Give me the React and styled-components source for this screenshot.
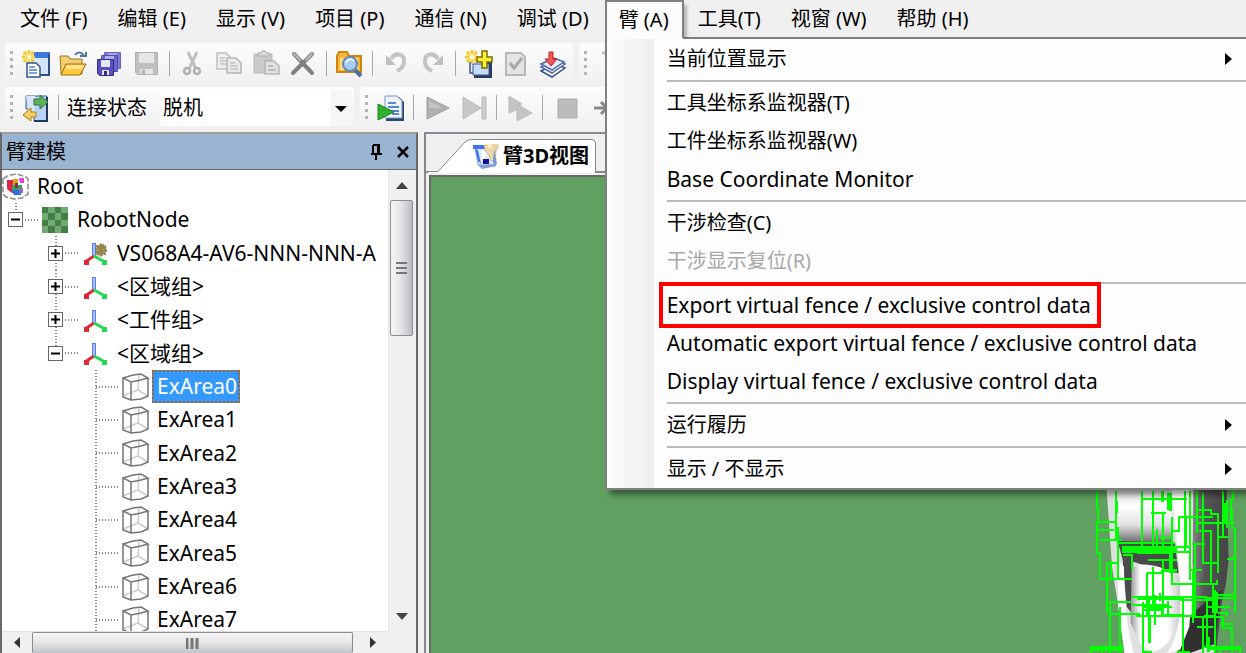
import React from "react";
import styled, { createGlobalStyle, css } from "styled-components";

const GlobalStyle = createGlobalStyle`
  * { box-sizing: border-box; }
  html, body, #root { height: 100%; }
  body {
    margin: 0;
    overflow: hidden;
    background: #f0f0f0;
    color: #000;
    font: 20px/24px "Noto Sans", "Noto Sans CJK SC", sans-serif;
  }
  button, select {
    margin: 0;
    padding: 0;
    border: 0;
    background: none;
    color: inherit;
    font: inherit;
  }
  svg { display: block; flex: none; }
`;

const Shell = styled.div`
  display: flex;
  flex-direction: column;
  height: 100%;
  overflow: hidden;
`;

/* ---------- menu bar ---------- */

const MenuBar = styled.nav`
  display: flex;
  height: 38px;
  flex: none;
  padding-left: 6px;
`;

const MenuSlot = styled.div`
  position: relative;
  z-index: ${(p) => (p.$open ? 5 : "auto")};
  display: flex;
  flex: none;
`;

const MenuTitle = styled.button`
  padding: 0 16px 0 14px;
  white-space: nowrap;
  ${(p) =>
    p.$open &&
    css`
      position: relative;
      z-index: 2;
      padding: 0 13px 0 12px;
      border: 2px solid #808080;
      border-bottom: 0;
      background: #fcfcfc;
      box-shadow: 4px 4px 3px -1px rgba(0, 0, 0, 0.25);
      clip-path: inset(0 -6px 0 0);
    `}
`;

const Dropdown = styled.div`
  position: absolute;
  top: 37px;
  left: 0;
  width: 644px;
  padding: 1px 0 0 60px;
  border: 2px solid #808080;
  background: linear-gradient(90deg, #fcfcfc 0, #eee 47px, #fdfdfd 47px);
  box-shadow: 5px 5px 5px rgba(0, 0, 0, 0.4);

  &::before {
    content: "";
    position: absolute;
    top: -2px;
    left: 0;
    width: 76px;
    height: 2px;
    background: #fcfcfc;
  }
`;

const MenuItem = styled.button`
  display: flex;
  align-items: center;
  justify-content: space-between;
  width: 100%;
  height: 38px;
  padding-right: 15px;
  text-align: left;
  white-space: nowrap;

  &:disabled { color: #a8a8a8; }
`;

const MenuLabel = styled.span`
  line-height: 38px;
  ${(p) => p.$latin && "font-size: 21px;"}
  ${(p) =>
    p.$marked &&
    css`
      margin-left: -4px;
      padding: 0 6px 0 4px;
      outline: 4px solid #f00;
    `}
`;

const MenuRule = styled.hr`
  height: 2px;
  margin: 2px 0;
  border: 0;
  background: #bbb;
`;

/* ---------- toolbars ---------- */

const ToolbarRow = styled.div`
  display: flex;
  gap: 6px;
  flex: none;
  height: 44px;
  padding: 5px 0 0 5px;
`;

const Strip = styled.div`
  display: flex;
  align-items: center;
  height: 41px;
  padding-right: 2px;
  border-radius: 3px;
  background: linear-gradient(#fdfdfd, #f0f0f0);
  ${(p) => p.$grow && "flex: 1; overflow: hidden;"}
`;

const Grip = styled.span`
  flex: none;
  width: 3px;
  height: 26px;
  margin: 0 4px 0 5px;
  background: repeating-linear-gradient(#b4b4b4 0 3px, transparent 3px 7px);
`;

const ToolButton = styled.button`
  display: flex;
  align-items: center;
  justify-content: center;
  flex: none;
  width: 37px;
  height: 36px;
`;

const ToolRule = styled.span`
  flex: none;
  width: 1px;
  height: 25px;
  margin: 0 4px;
  background: #a8a8a8;
`;

const StatusLabel = styled.label`
  margin: 0 13px 0 4px;
  white-space: nowrap;
`;

const SelectBox = styled.span`
  position: relative;
  display: flex;
  width: 192px;
  height: 36px;
  background: linear-gradient(90deg, #fff 171px, #f6f6f6 171px);

  svg {
    position: absolute;
    top: 16px;
    right: 5px;
    pointer-events: none;
  }
`;

const Select = styled.select`
  appearance: none;
  width: 100%;
  padding-left: 3px;
`;

/* ---------- work area ---------- */

const Work = styled.main`
  display: flex;
  gap: 6px;
  flex: 1;
  min-height: 0;
  padding-top: 6px;
`;

const Panel = styled.section`
  display: flex;
  flex-direction: column;
  flex: none;
  width: 418px;
  border: 2px solid #696969;
  border-top-color: #a0a0a0;
  border-bottom: 0;
  background: #fff;
`;

const PanelHead = styled.header`
  display: flex;
  align-items: center;
  gap: 13px;
  flex: none;
  height: 36px;
  padding: 0 6px 0 4px;
  border-bottom: 1px solid #696969;
  background: #99b4d1;
`;

const PanelTitle = styled.h2`
  flex: 1;
  margin: 0;
  font: inherit;
`;

const PanelBody = styled.div`
  display: grid;
  grid-template: minmax(0, 1fr) 22px / minmax(0, 1fr) 28px;
  flex: 1;
  min-height: 0;
  background: #f0f0f0;
`;

const Tree = styled.ul`
  overflow: hidden;
  margin: 0;
  padding: 0;
  background: #fff;
  font-size: 21px;
  list-style: none;
`;

const TreeRow = styled.li`
  display: flex;
  align-items: center;
  height: 33px;
  padding-left: ${(p) => Math.max(0, p.$level - 1) * 40}px;
  white-space: nowrap;
  &:nth-child(3n) { height: 34px; }
`;

const Branch = styled.span`
  display: flex;
  align-items: center;
  flex: none;
  width: 40px;
  height: 100%;
  padding-left: 6px;
  background:
    repeating-linear-gradient(#888 0 1px, transparent 1px 3px) 13px 0 / 2px ${(p) => (p.$last ? "50%" : "100%")} no-repeat,
    repeating-linear-gradient(90deg, #888 0 1px, transparent 1px 3px) 14px 50% / 24px 2px no-repeat;
`;

const Expander = styled.button`
  display: flex;
  align-items: center;
  justify-content: center;
  width: 15px;
  height: 15px;
  border: 1px solid #666;
  background: #fff;
`;

const NodeIcon = styled.span`
  flex: none;
  width: ${(p) => (p.$small ? 24 : 28)}px;
  margin-right: ${(p) => (p.$small ? 4 : 2)}px;
  margin-left: ${(p) => (p.$small ? 2 : 0)}px;
`;

const NodeLabel = styled.span`
  height: 33px;
  padding: 0 3px 0 4px;
  border: 1px solid transparent;
  line-height: 31px;
  ${(p) =>
    p.$selected &&
    css`
      padding: 0 1px 0 3px;
      border: 2px dotted #b06010;
      line-height: 29px;
      background: #39f;
      color: #fff;
    `}
`;

const VScroll = styled.div`
  display: flex;
  flex-direction: column;
  padding: 0 3px 0 1px;
  border-left: 1px solid #e4e4e4;
`;

const HScroll = styled.div`
  display: flex;
  border-top: 1px solid #e0e0e0;
`;

const ScrollButton = styled.button`
  display: flex;
  align-items: center;
  justify-content: center;
  flex: none;
  ${(p) => (p.$wide ? "width: 30px; height: 21px;" : "width: 23px; height: 30px;")}
`;

const Thumb = styled.div`
  display: flex;
  align-items: center;
  justify-content: center;
  border: 1px solid #8c8c8c;
  border-radius: 2px;
  ${(p) =>
    p.$wide
      ? "flex: 1; margin-right: 5px; border-bottom: 0; background: linear-gradient(#f6f6f6, #e4e4e6 50%, #c4c5c9);"
      : "height: 136px; margin-bottom: auto; background: linear-gradient(90deg, #f6f6f6, #e2e2e4 50%, #bcbdc2);"}
`;

const View = styled.section`
  display: flex;
  flex-direction: column;
  flex: 1;
  min-width: 0;
  border-top: 2px solid #858891;
  border-left: 2px solid #858891;
`;

const TabStrip = styled.div`
  display: flex;
  align-items: flex-end;
  flex: none;
  height: 39px;
  padding: 5px 0 0 2px;
  background: linear-gradient(#f0f0f0 37px, #858891 37px);
`;

const TabSlope = styled.svg`
  width: 44px;
  height: 34px;
`;

const Tab = styled.button`
  display: flex;
  align-items: center;
  gap: 3px;
  height: 34px;
  padding: 0 6px 2px 0;
  border-top: 1px solid #858891;
  border-right: 1px solid #858891;
  border-radius: 0 5px 0 0;
  background: #fff;
  font-weight: 700;
`;

const Canvas = styled.div`
  position: relative;
  flex: 1;
  margin: 2px 0 0 3px;
  border-top: 2px solid #696969;
  border-left: 2px solid #696969;
  background: #60a060;
`;

const Robot = styled.svg`
  position: absolute;
  right: 0;
  bottom: 0;
  width: 166px;
  height: 163px;
`;

/* ---------- icons ---------- */

const Icon = ({ children, size = 28 }) => (
  <svg width={size} height={size} viewBox={`0 0 ${size} ${size}`} aria-hidden="true">
    {children}
  </svg>
);

const Spark = () => (
  <g stroke="#f0c838" strokeWidth="2">
    <path d="M1 1h11v11H1z" fill="#f8e080" stroke="none" />
    <path d="M7 0v14M0 7h13M2 2l10 10M12 2L2 12" />
    <circle cx="7" cy="7" r="3" fill="#fffce0" stroke="#f5e070" />
  </g>
);

const NewIcon = () => (
  <Icon>
    <path d="M10 3h17v22H10z" fill="#dce9fb" stroke="#456ea8" />
    <path d="M10 2h18v6H10z" fill="#3c7ae0" />
    <path d="M15 9h11v15H15z" fill="#d4e4fb" />
    <path d="M27 4v21H17" fill="none" stroke="#2f4f84" strokeWidth="2" />
    <Spark />
    <path d="M5 13h9l4 4v10H5z" fill="#fff" stroke="#35568f" strokeWidth="1.5" />
    <path d="M7 17h6M7 20h8M7 23h8" stroke="#4a83dc" strokeWidth="1.5" />
  </Icon>
);

const OpenIcon = () => (
  <Icon>
    <path d="M1 6h8l2 3h12v15H2z" fill="#f2ce70" stroke="#a27520" />
    <path d="M7 14h20l-6 11H2z" fill="#ffc93c" stroke="#a06a10" />
    <path d="M8 15h17l-2 4H6z" fill="#ffe48a" />
    <path d="M16 5c3-4 8-3 9 2M21 6h6V2" fill="none" stroke="#54779a" strokeWidth="2" />
  </Icon>
);

const Floppy = ({ x, y, s = 17, fill = "#5550bd", line = "#312e85", shade = "#e4e4fa" }) => (
  <g transform={`translate(${x} ${y})`}>
    <path d={`M.5.5h${s}v${s}h-${s - 2}l-2-2z`} fill={fill} stroke={line} />
    <path d={`M4 1h${s - 7}v${s / 2 - 1}H4z`} fill={shade} />
    <path d={`M5 ${s - 5}h${s - 9}v5H5z`} fill={shade} />
    <path d={`M7 ${s - 4}h3v4H7z`} fill={line} />
  </g>
);

const SaveAllIcon = () => (
  <Icon>
    <Floppy x="8" y="2" s={16} fill="#7e7ad8" line="#6864c4" shade="#a8a5ec" />
    <Floppy x="5" y="5" s={16} fill="#6b66cc" line="#524eb0" shade="#b4b1f0" />
    <Floppy x="1" y="9" s={16} />
  </Icon>
);

const SaveIcon = () => (
  <Icon>
    <Floppy x="2" y="2" s={22} fill="#c0c0c0" line="#b0b0b0" shade="#e6e6e6" />
  </Icon>
);

const CutIcon = () => (
  <Icon>
    <path d="M9 2l8 17M18 2L10 19" stroke="#c0c0c0" strokeWidth="3" />
    <circle cx="8" cy="21" r="3" fill="none" stroke="#b0b0b0" strokeWidth="2.5" />
    <circle cx="18" cy="21" r="3" fill="none" stroke="#b0b0b0" strokeWidth="2.5" />
  </Icon>
);

const CopyIcon = () => (
  <Icon>
    <path d="M1 3h9l4 4v12H1z" fill="#eee" stroke="#bebebe" strokeWidth="1.5" />
    <path d="M4 8h5M4 11h6M4 14h6" stroke="#c4c4c4" strokeWidth="1.5" />
    <path d="M11 8h9l5 5v10H11z" fill="#eaeaea" stroke="#b4b4b4" strokeWidth="1.5" />
    <path d="M14 13h5M14 16h8M14 19h8" stroke="#c0c0c0" strokeWidth="1.5" />
  </Icon>
);

const PasteIcon = () => (
  <Icon>
    <path d="M1 4h18v19H1z" fill="#cacaca" stroke="#b8b8b8" />
    <path d="M5 6V3h3l1-2h3l1 2h3v3z" fill="#ddd" stroke="#aaa" />
    <path d="M12 11h9l5 5v8H12z" fill="#e2e2e2" stroke="#b4b4b4" strokeWidth="1.5" />
    <path d="M15 16h5M15 20h8" stroke="#bcbcbc" strokeWidth="2" />
  </Icon>
);

const DeleteIcon = () => (
  <Icon>
    <path d="M4 4l18 19M22 4L3 23" stroke="#808080" strokeWidth="4" strokeLinecap="round" />
    <path d="M4 4l6 6M22 4l-6 6" stroke="#b8b8b8" strokeWidth="2" strokeLinecap="round" />
  </Icon>
);

const FindIcon = () => (
  <Icon>
    <path d="M1 6l2-4h8l2 4h12v16H1z" fill="#f7b93c" stroke="#d18312" strokeWidth="2" />
    <path d="M4 8h18v12H4z" fill="#ffda80" />
    <path d="M19 20l6 6" stroke="#4d6f9b" strokeWidth="4" />
    <circle cx="14" cy="14" r="7" fill="#a9cdf1" stroke="#6287b8" strokeWidth="2" />
    <path d="M10 13c1-4 5-5 8-2" stroke="#e9f5ff" strokeWidth="2" fill="none" />
  </Icon>
);

const UndoIcon = ({ flip }) => (
  <Icon>
    <g transform={flip ? "translate(28 0) scale(-1 1)" : undefined} stroke="#c4c4c4" fill="none">
      <path d="M9 9c4-7 14-6 13 3 0 5-3 7-7 9" strokeWidth="4" />
      <path d="M4 5v10h10z" fill="#c0c0c0" stroke="none" />
    </g>
  </Icon>
);

const AddIcon = () => (
  <Icon>
    <path d="M9 12h18v16H9z" fill="#263c63" />
    <path d="M5 9h16v14H5z" fill="#e3eefc" stroke="#3c5687" strokeWidth="1.5" />
    <path d="M8 14h16v11H8z" fill="#c5dbf8" stroke="#3c5687" />
    <Spark />
    <path d="M17 1h5v6h5v5h-5v6h-5v-6h-5V7h5z" fill="#ffee38" stroke="#777000" strokeWidth="1.5" />
  </Icon>
);

const CheckIcon = () => (
  <Icon>
    <path d="M4 3h15l4 4v18H4z" fill="#e4e4e4" stroke="#b8b8b8" strokeWidth="2" />
    <path d="M8 13l4 5 8-10" fill="none" stroke="#a6a6a6" strokeWidth="3" />
  </Icon>
);

const ImportIcon = () => (
  <Icon>
    <path d="M2 21l14-7 10 4-13 9z" fill="#fff" stroke="#35508a" strokeWidth="1.5" />
    <path d="M2 17l14-7 10 4-13 9z" fill="#fff" stroke="#506aa5" strokeWidth="1.5" />
    <path d="M2 14l13-6 10 4-12 8z" fill="#e5edff" stroke="#506aa5" strokeWidth="1.5" />
    <path d="M10 2h4v7h4l-6 7-6-7h4z" fill="#f25a5a" stroke="#c01e1e" />
  </Icon>
);

const FilterIcon = () => (
  <Icon>
    <path d="M6 3h20M9 8h17M13 13h13M18 17v8" stroke="#c4c4c4" strokeWidth="3" />
  </Icon>
);

const ConnectIcon = () => (
  <Icon>
    <path d="M4 2h21v25H12V15H4z" fill="#b9d2f7" stroke="#426599" />
    <path d="M4 2h9v21H8z" fill="#d8e6fc" />
    <path d="M25 3v24H12" fill="none" stroke="#22355c" strokeWidth="2" />
    <path d="M12 5h6V1l8 7-8 7v-4h-6z" fill="#5cb05a" stroke="#34793a" />
    <path d="M14 18H9v-4l-8 7 8 6v-4h5z" fill="#f5d060" stroke="#a87e18" />
  </Icon>
);

const RunDocIcon = () => (
  <Icon>
    <path d="M9 3h13l5 5v19H9z" fill="#2a4371" />
    <path d="M8 2h12l5 5v17H8z" fill="#eef5ff" stroke="#7894c8" />
    <path d="M11 9h8M11 13h11M11 17h11M15 20h7" stroke="#2b5fc5" strokeWidth="1.5" />
    <path d="M1 10l16 8-16 8z" fill="#2fb12f" stroke="#168016" />
  </Icon>
);

const PlayIcon = () => (
  <Icon>
    <path d="M4 3l22 11L4 25z" fill="#b0b0b0" stroke="#9c9c9c" />
    <path d="M6 7l14 7H6z" fill="#c4c4c4" />
  </Icon>
);

const StepIcon = () => (
  <Icon>
    <path d="M3 3l18 11L3 25z" fill="#c8c8c8" stroke="#b8b8b8" />
    <path d="M22 3h4v22h-4z" fill="#ccc" stroke="#b8b8b8" />
  </Icon>
);

const SkipIcon = () => (
  <Icon>
    <path d="M3 2l13 8-4 2v3l-9 4z" fill="#c4c4c4" stroke="#b8b8b8" />
    <path d="M11 10l15 9-15 8z" fill="#c4c4c4" stroke="#b8b8b8" />
  </Icon>
);

const StopIcon = () => (
  <Icon>
    <path d="M6 5h19v19H6z" fill="#bcbcbc" stroke="#acacac" />
  </Icon>
);

const ArrowIcon = () => (
  <Icon>
    <path d="M5 14h12M12 8l6 6-6 6" stroke="#888" strokeWidth="3" fill="none" />
  </Icon>
);

const Triangle = ({ d, w, h, fill = "#000" }) => (
  <svg width={w} height={h} viewBox={`0 0 ${w} ${h}`} aria-hidden="true">
    <path d={d} fill={fill} />
  </svg>
);

const RootIcon = () => (
  <Icon>
    <path
      d="M1 6l6-4 8-1 9 3 2 2v15l-6 4-8 1-8-2-3-3z"
      fill="#fff"
      stroke="#8a8a8a"
      strokeWidth="1.5"
      strokeDasharray="6 2"
    />
    <path d="M5 7h8v14l-3-1-5-4z" fill="#dd2448" />
    <path d="M11 6h5v6h-5z" fill="#e0a116" />
    <path d="M17 5h5v5h-4z" fill="#e93fe0" />
    <path d="M10 12h10v6H10z" fill="#37a14b" />
    <path d="M10 17h9v5h-7z" fill="#1b73df" />
    <path d="M17 15h4v5h-4z" fill="#9b63c4" />
    <path d="M13 10h3v5h-3z" fill="#735" />
  </Icon>
);

const BoardIcon = () => (
  <Icon>
    <path d="M0 1h26v26H0z" fill="#72a972" />
    <path
      d="M0 1h6v6H0zM13 1h6v6h-6zM6 7h7v7H6zM19 7h7v7h-7zM0 14h6v6H0zM13 14h6v6h-6zM6 20h7v7H6zM19 20h7v7h-7z"
      fill="#427f45"
    />
  </Icon>
);

const AxesIcon = ({ robot }) => (
  <Icon size={24}>
    <path d="M10 2v13" stroke="#5a7eec" strokeWidth="4" />
    <path d="M10 3v12" stroke="#a9c0ff" strokeWidth="2" />
    <path d="M10 15l-9 6" stroke="#e32636" strokeWidth="3" />
    <path d="M10 15l11 6" stroke="#22dc50" strokeWidth="3" />
    <path d="M0 19h5v5H0z" fill="#e32636" />
    <path d="M18 19h5v5h-5z" fill="#22dc50" />
    {robot && (
      <g>
        <circle cx="17" cy="9" r="5" fill="#a49058" stroke="#8a7a44" strokeWidth="2" strokeDasharray="2 1" />
        <path d="M12 4l10 10M22 4L12 14M17 2v14" stroke="#8a7a44" />
      </g>
    )}
  </Icon>
);

const CubeIcon = () => (
  <Icon>
    <path d="M17 2l-1 15L1 23M16 17l10 6" fill="none" stroke="#ccc" strokeWidth="1.5" />
    <path
      d="M1 5l10-3 8-1 7 4-7 2-10 2zM1 5v19l8 3 10-1 7-3V5M9 9v18"
      fill="none"
      stroke="#757575"
      strokeWidth="1.5"
    />
  </Icon>
);

const ViewIcon = () => (
  <Icon>
    <path d="M3 5l3 18 17 1 1-17z" fill="#dfe8fc" stroke="#8ba7df" />
    <path d="M1 3h12v4H1zM3 7l3 12 3 3-3-14z" fill="#3e75e8" />
    <path d="M12 3h14v3l-3 2 1 10-5 1-2-6-3-3z" fill="#ecd9ab" stroke="#d8bd84" />
    <path d="M10 8l5 3-2 7-4-2z" fill="#fff" />
    <path d="M15 2l3 5 2-4z" fill="#fff3c8" />
    <path d="M11 17h6v5h-6z" fill="#11119b" />
    <path d="M22 8l3 14-2 2-2-4z" fill="#6f93dc" />
    <path d="M6 23l18-1v2l-14 3z" fill="#7f9bd8" />
  </Icon>
);

/* ---------- robot model ---------- */

const RobotModel = () => (
  <Robot viewBox="0 30 498 489" preserveAspectRatio="none" role="img" aria-label="Robot">
    <defs>
      <linearGradient id="drum" x1="0" y1="0" x2="0" y2="1">
        <stop offset="0" stopColor="#d8d8d8" />
        <stop offset=".3" stopColor="#fff" />
        <stop offset=".65" stopColor="#e2e2e2" />
        <stop offset="1" stopColor="#666" />
      </linearGradient>
      <linearGradient id="side" x1="0" y1="0" x2="1" y2="0">
        <stop offset="0" stopColor="#e0e0e0" />
        <stop offset=".3" stopColor="#888" />
        <stop offset=".55" stopColor="#555" />
        <stop offset="1" stopColor="#444" />
      </linearGradient>
      <linearGradient id="core" x1="0" y1="0" x2="1" y2="0">
        <stop offset="0" stopColor="#999" />
        <stop offset=".2" stopColor="#fff" />
        <stop offset=".75" stopColor="#fff" />
        <stop offset="1" stopColor="#c8c8c8" />
      </linearGradient>
    </defs>
    <path d="M320 30H440L446 240L438 310L424 375L408 519H288L330 420z" fill="url(#side)" />
    <path d="M336 400L424 330L400 519H290z" fill="#303030" />
    <path d="M330 519L405 492V519z" fill="#ddd" />
    <path d="M80 30H340L336 400L288 519H133L118 400L96 260z" fill="#e0e0e0" />
    <path d="M105 30H275L280 190H115z" fill="url(#drum)" />
    <path d="M113 183L285 188L296 280L240 272L160 245L155 400L140 380L128 240z" fill="#4b4b4b" />
    <path d="M155 270Q170 242 240 262L300 290V400Q290 475 240 508Q205 525 180 490L152 430z" fill="url(#core)" />
    <path d="M276 30H325L338 280L328 440L300 510L262 519Q300 460 302 370L298 270z" fill="#fff" />
    <path d="M132 260Q132 420 162 519H134L115 380L112 240z" fill="#fff" />
    <g fill="none" stroke="#0f0" strokeWidth="6" shapeRendering="crispEdges">
      <path d="M51 33V84H55V127M51 127V218H60V298M51 126H108M51 151H103M60 180H126M60 298H156M81 250V397M93 243V300M81 250H110M90 363V519M90 366H152M84 402H180M33 519V500H130M45 508H130M66 519V495M120 380V519" />
      <path d="M108 33V184M113 140V300M187 33V120M184 57H320M218 33V213M246 33V66M264 40V90M213 100H258M250 95V213M187 120V213M230 147V215M275 110V300M240 174H280M280 152H296V112H350M315 33V215M330 33V300" />
      <path d="M350 33V160M350 90H392V103H415V280M368 40V250M350 110H400M350 128H462M356 152H394V310M430 33V170M440 60V145M460 33V60H453V120M466 145V400M445 90H456V145H466M415 170H445M367 250H412M442 236H466M335 192H375M345 192V410" />
      <path d="M126 201H330M126 216H330M116 190H285M130 225H155V270M205 240H290M243 272H290M200 278H250M250 240V400M220 260V380M200 278V405M275 300V312H335M310 350V400M330 270H365" />
      <path d="M156 350H320M170 358H310M155 374H260M185 382H275M190 390H246M168 408H335M207 350V489M190 365V519M225 345V435M240 340V362M246 385V405H310M263 363V402M275 350H380M300 361H415M338 312H412V300" />
      <path d="M340 275V430M368 410V519M380 355V500M398 310V400M405 330V519M385 380H450M335 410H430M310 400V519M290 515H330M350 440H400M375 355H466M408 345H466M415 400H440V410M430 409V445H455V519M420 432H460M370 500H480V519M385 508H486M420 497V519M186 516H215" />
    </g>
    <g fill="none" stroke="#0f0" strokeWidth="9" shapeRendering="crispEdges">
      <path d="M108 62V98M270 40V92M246 33V65M315 112V205M125 209H290M170 216H270M248 272H290M200 384H250M207 405V488M380 505H475M35 508H130M385 470V515M372 410H405M408 335V400M435 70V125M272 205V280" />
    </g>
  </Robot>
);

/* ---------- data ---------- */

const menusBefore = ["文件 (F)", "编辑 (E)", "显示 (V)", "项目 (P)", "通信 (N)", "调试 (D)"];
const menusAfter = ["工具(T)", "视窗 (W)", "帮助 (H)"];

const armMenu = [
  [{ label: "当前位置显示", sub: true }],
  [
    { label: "工具坐标系监视器(T)" },
    { label: "工件坐标系监视器(W)" },
    { label: "Base Coordinate Monitor", latin: true },
  ],
  [{ label: "干涉检查(C)" }, { label: "干涉显示复位(R)", disabled: true }],
  [
    { label: "Export virtual fence / exclusive control data", latin: true, marked: true },
    { label: "Automatic export virtual fence / exclusive control data", latin: true },
    { label: "Display virtual fence / exclusive control data", latin: true },
  ],
  [{ label: "运行履历", sub: true }],
  [{ label: "显示 / 不显示", sub: true }],
];

const fileTools = [
  [["New", NewIcon], ["Open", OpenIcon], ["Save all", SaveAllIcon], ["Save", SaveIcon]],
  [["Cut", CutIcon], ["Copy", CopyIcon], ["Paste", PasteIcon], ["Delete", DeleteIcon]],
  [["Find", FindIcon]],
  [["Undo", UndoIcon], ["Redo", () => <UndoIcon flip />]],
  [["Add", AddIcon], ["Check", CheckIcon], ["Import", ImportIcon]],
];

const runTools = [
  [["Run document", RunDocIcon]],
  [["Run", PlayIcon], ["Step", StepIcon]],
  [["Skip", SkipIcon]],
  [["Stop", StopIcon], ["Next", ArrowIcon]],
];

const nodes = [
  { level: 0, label: "Root", icon: RootIcon },
  { level: 1, label: "RobotNode", icon: BoardIcon, state: "-", last: true },
  { level: 2, label: "VS068A4-AV6-NNN-NNN-A", icon: () => <AxesIcon robot />, state: "+" },
  { level: 2, label: "<区域组>", icon: AxesIcon, state: "+" },
  { level: 2, label: "<工件组>", icon: AxesIcon, state: "+" },
  { level: 2, label: "<区域组>", icon: AxesIcon, state: "-", last: true },
  ...Array.from({ length: 8 }, (_, i) => ({
    level: 3,
    label: `ExArea${i}`,
    icon: CubeIcon,
    selected: i === 0,
  })),
];

const ToolGroups = ({ groups }) =>
  groups.map((group, i) => (
    <React.Fragment key={i}>
      {i > 0 && <ToolRule />}
      {group.map(([name, Glyph]) => (
        <ToolButton key={name} type="button" aria-label={name}>
          <Glyph />
        </ToolButton>
      ))}
    </React.Fragment>
  ));

const ArmDropdown = () => (
  <Dropdown role="menu">
    {armMenu.map((group, i) => (
      <React.Fragment key={i}>
        {i > 0 && <MenuRule />}
        {group.map((item) => (
          <MenuItem key={item.label} type="button" role="menuitem" disabled={item.disabled}>
            <MenuLabel $latin={item.latin} $marked={item.marked}>
              {item.label}
            </MenuLabel>
            {item.sub && <Triangle w={7} h={12} d="M0 0l7 6-7 6z" />}
          </MenuItem>
        ))}
      </React.Fragment>
    ))}
  </Dropdown>
);

const TreeNode = ({ level, label, icon: Glyph, state, last, selected }) => (
  <TreeRow $level={level}>
    {level > 0 && (
      <Branch $last={last}>
        {state && (
          <Expander type="button" aria-label={state === "+" ? "Expand" : "Collapse"}>
            <svg width="9" height="9" viewBox="0 0 9 9" aria-hidden="true">
              <path d={state === "+" ? "M0 4.5h9M4.5 0v9" : "M0 4.5h9"} stroke="#000" strokeWidth="2" />
            </svg>
          </Expander>
        )}
      </Branch>
    )}
    <NodeIcon $small={level === 2}>
      <Glyph />
    </NodeIcon>
    <NodeLabel $selected={selected}>{label}</NodeLabel>
  </TreeRow>
);

export default function App() {
  return (
    <Shell>
      <GlobalStyle />
      <MenuBar>
        {menusBefore.map((m) => (
          <MenuSlot key={m}>
            <MenuTitle type="button">{m}</MenuTitle>
          </MenuSlot>
        ))}
        <MenuSlot $open>
          <MenuTitle type="button" $open>
            臂 (A)
          </MenuTitle>
          <ArmDropdown />
        </MenuSlot>
        {menusAfter.map((m) => (
          <MenuSlot key={m}>
            <MenuTitle type="button">{m}</MenuTitle>
          </MenuSlot>
        ))}
      </MenuBar>

      <ToolbarRow>
        <Strip>
          <Grip />
          <ToolGroups groups={fileTools} />
        </Strip>
        <Strip $grow>
          <Grip />
          <ToolGroups groups={[[["Filter", FilterIcon]]]} />
        </Strip>
      </ToolbarRow>
      <ToolbarRow>
        <Strip>
          <Grip />
          <ToolGroups groups={[[["Connect", ConnectIcon]]]} />
          <ToolRule />
          <StatusLabel htmlFor="connection">连接状态</StatusLabel>
          <SelectBox>
            <Select id="connection" defaultValue="脱机">
              <option>脱机</option>
            </Select>
            <Triangle w={12} h={6} d="M0 0h12L6 6z" />
          </SelectBox>
        </Strip>
        <Strip $grow>
          <Grip />
          <ToolGroups groups={runTools} />
        </Strip>
      </ToolbarRow>

      <Work>
        <Panel>
          <PanelHead>
            <PanelTitle>臂建模</PanelTitle>
            <button type="button" aria-label="Pin">
              <svg width="13" height="16" viewBox="0 0 13 16" aria-hidden="true">
                <path d="M3 1h6v9M3 1v9M1 10h11M6 10v6M8 1v9" stroke="#000" strokeWidth="2" fill="none" />
              </svg>
            </button>
            <button type="button" aria-label="Close">
              <svg width="14" height="14" viewBox="0 0 14 14" aria-hidden="true">
                <path d="M2 2l10 10M12 2L2 12" stroke="#000" strokeWidth="2.5" />
              </svg>
            </button>
          </PanelHead>
          <PanelBody>
            <Tree>
              {nodes.map((n, i) => (
                <TreeNode key={i} {...n} />
              ))}
            </Tree>
            <VScroll>
              <ScrollButton type="button" aria-label="Scroll up">
                <Triangle w={12} h={7} d="M0 7l6-7 6 7z" fill="#444" />
              </ScrollButton>
              <Thumb>
                <svg width="11" height="13" viewBox="0 0 11 13" aria-hidden="true">
                  <path d="M0 1h11M0 6h11M0 11h11" stroke="#777" strokeWidth="2" />
                </svg>
              </Thumb>
              <ScrollButton type="button" aria-label="Scroll down">
                <Triangle w={12} h={7} d="M0 0h12L6 7z" fill="#444" />
              </ScrollButton>
            </VScroll>
            <HScroll>
              <ScrollButton $wide type="button" aria-label="Scroll left">
                <Triangle w={6} h={11} d="M6 0v11L0 5.500z" fill="#333" />
              </ScrollButton>
              <Thumb $wide>
                <svg width="14" height="11" viewBox="0 0 14 11" aria-hidden="true">
                  <path d="M1 0v11M6 0v11M11 0v11" stroke="#777" strokeWidth="3" />
                </svg>
              </Thumb>
              <ScrollButton $wide type="button" aria-label="Scroll right">
                <Triangle w={6} h={11} d="M0 0v11l6-5.500z" fill="#333" />
              </ScrollButton>
            </HScroll>
          </PanelBody>
        </Panel>

        <View>
          <TabStrip>
            <TabSlope viewBox="0 0 44 34" aria-hidden="true">
              <path d="M0 34V32.500H10L37 3Q40 .5 44 .5V34z" fill="#fff" />
              <path d="M0 32.500H10L37 3Q40 .5 44 .5" fill="none" stroke="#858891" />
            </TabSlope>
            <Tab type="button">
              <ViewIcon />
              臂3D视图
            </Tab>
          </TabStrip>
          <Canvas>
            <RobotModel />
          </Canvas>
        </View>
      </Work>
    </Shell>
  );
}
